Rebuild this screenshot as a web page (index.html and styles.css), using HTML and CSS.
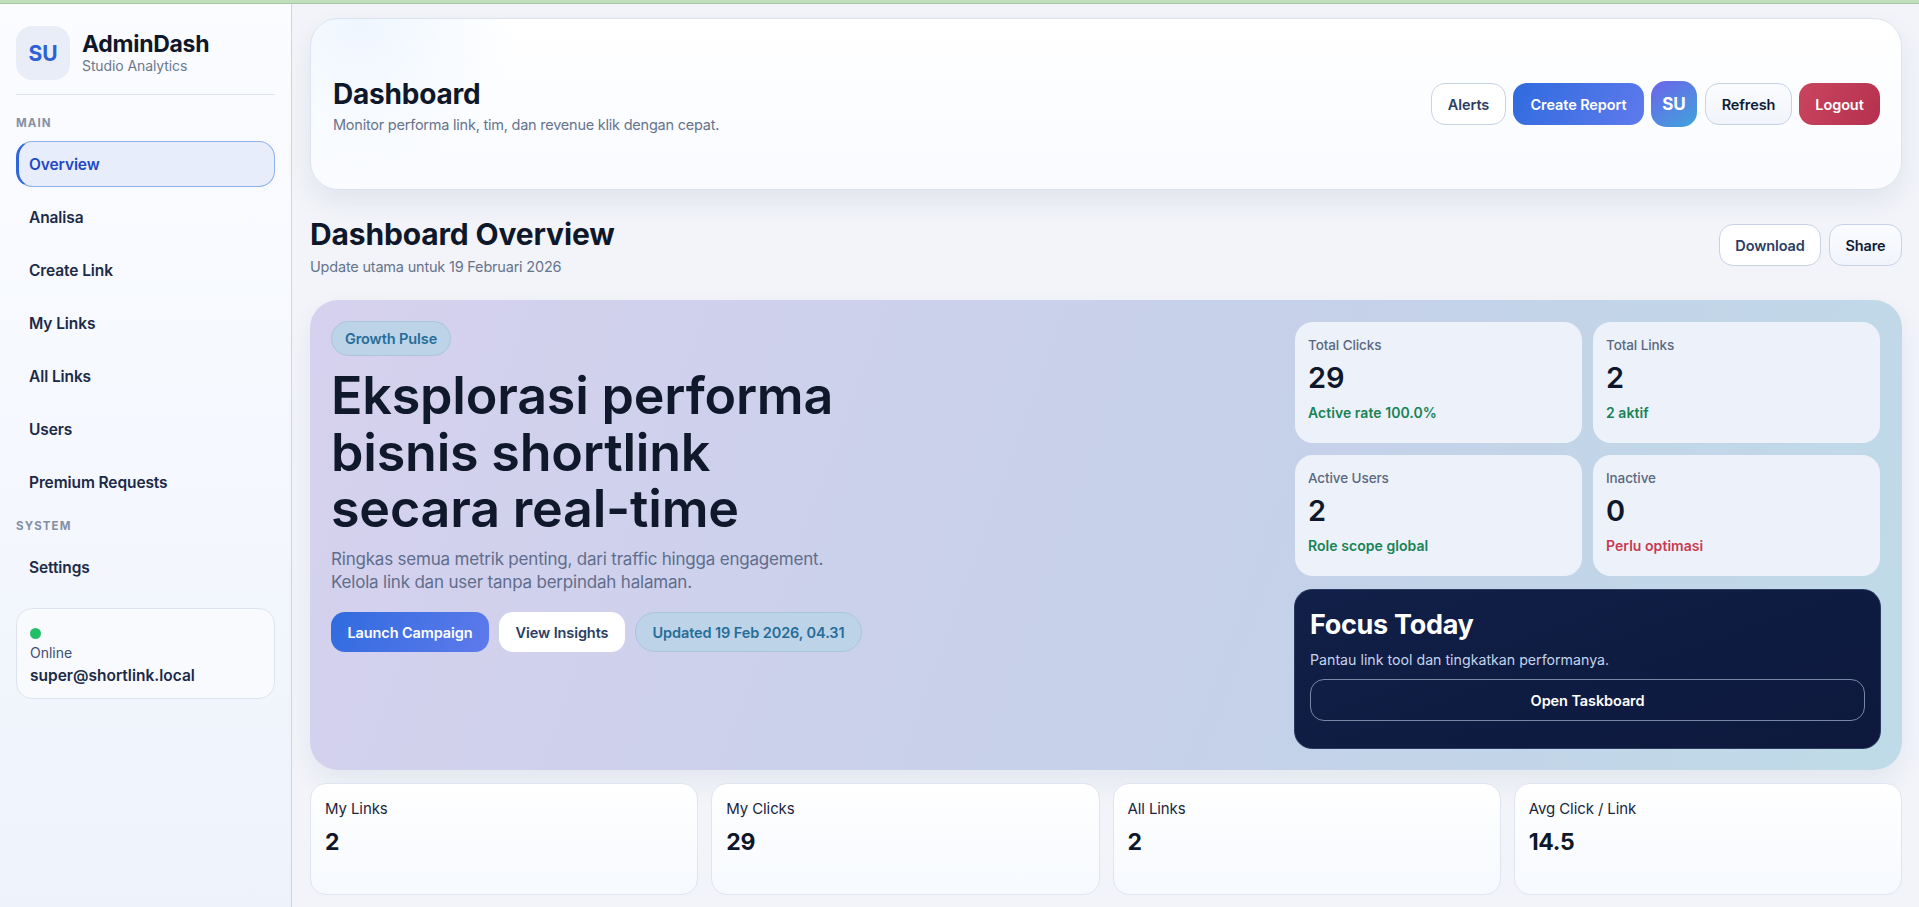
FILE: index.html
```html
<!DOCTYPE html>
<html lang="id">
<head>
  <meta charset="UTF-8" />
  <title>AdminDash</title>
  <link rel="stylesheet" href="styles.css">
</head>
<body>
  <div class="load-strip"></div>
  <div class="shell">
    <aside class="sidebar">
      <div class="brand">
        <div class="brand-logo">SU</div>
        <div class="brand-text">
          <div class="brand-name">AdminDash</div>
          <div class="brand-sub">Studio Analytics</div>
        </div>
      </div>

      <div class="nav-label nav-label-main">MAIN</div>
      <nav class="nav">
        <a class="nav-item active">Overview</a>
        <a class="nav-item">Analisa</a>
        <a class="nav-item">Create Link</a>
        <a class="nav-item">My Links</a>
        <a class="nav-item">All Links</a>
        <a class="nav-item">Users</a>
        <a class="nav-item">Premium Requests</a>
      </nav>
      <div class="nav-label nav-label-system">SYSTEM</div>
      <nav class="nav nav-system">
        <a class="nav-item">Settings</a>
      </nav>

      <div class="status-card">
        <span class="status-dot"></span>
        <div class="status-text">Online</div>
        <div class="status-mail">super@shortlink.local</div>
      </div>
    </aside>

    <main class="main">
      <header class="topbar">
        <div class="topbar-head">
          <h1 class="topbar-title">Dashboard</h1>
          <p class="topbar-sub">Monitor performa link, tim, dan revenue klik dengan cepat.</p>
        </div>
        <div class="topbar-actions">
          <button class="btn btn-white btn-alerts">Alerts</button>
          <button class="btn btn-primary btn-report">Create Report</button>
          <div class="avatar">SU</div>
          <button class="btn btn-soft btn-refresh">Refresh</button>
          <button class="btn btn-danger btn-logout">Logout</button>
        </div>
      </header>

      <section class="page-head">
        <div>
          <h2 class="page-title">Dashboard Overview</h2>
          <p class="page-sub">Update utama untuk 19 Februari 2026</p>
        </div>
        <div class="page-actions">
          <button class="btn btn-white btn-download">Download</button>
          <button class="btn btn-soft btn-share">Share</button>
        </div>
      </section>

      <section class="hero">
        <div class="hero-left">
          <span class="pill pill-growth">Growth Pulse</span>
          <h3 class="hero-title">Eksplorasi performa bisnis shortlink secara real-time</h3>
          <p class="hero-text">Ringkas semua metrik penting, dari traffic hingga engagement. Kelola link dan user tanpa berpindah halaman.</p>
          <div class="hero-actions">
            <button class="btn btn-primary btn-launch">Launch Campaign</button>
            <button class="btn btn-plain">View Insights</button>
            <span class="pill pill-updated">Updated 19 Feb 2026, 04.31</span>
          </div>
        </div>

        <div class="hero-right">
          <div class="mini-grid">
            <div class="mini-card">
              <div class="mini-label">Total Clicks</div>
              <div class="mini-value">29</div>
              <div class="mini-meta good">Active rate 100.0%</div>
            </div>
            <div class="mini-card">
              <div class="mini-label">Total Links</div>
              <div class="mini-value">2</div>
              <div class="mini-meta good">2 aktif</div>
            </div>
            <div class="mini-card">
              <div class="mini-label">Active Users</div>
              <div class="mini-value">2</div>
              <div class="mini-meta good">Role scope global</div>
            </div>
            <div class="mini-card">
              <div class="mini-label">Inactive</div>
              <div class="mini-value">0</div>
              <div class="mini-meta bad">Perlu optimasi</div>
            </div>
          </div>
          <div class="focus">
            <div class="focus-title">Focus Today</div>
            <p class="focus-text">Pantau link tool dan tingkatkan performanya.</p>
            <button class="focus-btn">Open Taskboard</button>
          </div>
        </div>
      </section>

      <section class="stats">
        <div class="stat"><div class="stat-label">My Links</div><div class="stat-value">2</div></div>
        <div class="stat"><div class="stat-label">My Clicks</div><div class="stat-value">29</div></div>
        <div class="stat"><div class="stat-label">All Links</div><div class="stat-value">2</div></div>
        <div class="stat"><div class="stat-label">Avg Click / Link</div><div class="stat-value">14.5</div></div>
      </section>
    </main>
  </div>
</body>
</html>
```

FILE: styles.css
```css
* {
  box-sizing: border-box;
}

html, body {
  height: 100%;
}

body {
  margin: 0;
  display: flex;
  flex-direction: column;
  overflow: hidden;
  font-family: Inter, "Noto Sans", sans-serif;
  color: #0f172a;
  background: #f2f4f9;
}

h1, h2, h3, p {
  margin: 0;
}

.load-strip {
  height: 4px;
  background: #c2dfbd;
  border-bottom: 1px solid #a9c9a6;
}

.shell {
  flex: 1;
  display: flex;
  min-height: 0;
}

/* sidebar */
.sidebar {
  width: 292px;
  flex-shrink: 0;
  padding: 22px 16px 0;
  border-right: 1px solid #cdd6e8;
  background: linear-gradient(180deg, #fbfcff 0%, #f5f8fe 50%, #eef2fb 100%);
}

.brand {
  display: flex;
  align-items: center;
  gap: 12px;
  padding-bottom: 14px;
  border-bottom: 1px solid #dde4f0;
}

.brand-logo {
  width: 54px;
  height: 54px;
  border-radius: 16px;
  background: #e9edf7;
  color: #2f5fd6;
  font-size: 21px;
  font-weight: 700;
  display: flex;
  align-items: center;
  justify-content: center;
}

.brand-text {
  padding-bottom: 2px;
}

.brand-name {
  font-size: 23px;
  line-height: 26px;
  font-weight: 700;
  letter-spacing: -0.3px;
  color: #0f172a;
}

.brand-sub {
  font-size: 14px;
  line-height: 17px;
  letter-spacing: -0.1px;
  color: #6b7890;
}

.nav-label {
  font-size: 11.5px;
  line-height: 14px;
  font-weight: 700;
  letter-spacing: 1.1px;
  color: #8390a6;
}

.nav-label-main {
  margin-top: 21px;
  margin-bottom: 11px;
}

.nav-label-system {
  margin-top: 14px;
}

.nav {
  display: flex;
  flex-direction: column;
  gap: 7px;
}

.nav-system {
  margin-top: 11px;
}

.nav-item {
  height: 46px;
  display: flex;
  align-items: center;
  padding-left: 12px;
  border: 1px solid transparent;
  border-radius: 16px;
  font-size: 15.5px;
  font-weight: 600;
  letter-spacing: -0.1px;
  color: #1c2a48;
}

.nav-item.active {
  background: #e7edfb;
  border-color: #8fb0ef;
  border-left: 3px solid #2f66dc;
  padding-left: 10px;
  color: #2348c4;
}

.status-card {
  margin-top: 18px;
  height: 91px;
  padding: 19px 13px 0;
  border: 1px solid #dde4f0;
  border-radius: 16px;
  background: #f8fafe;
}

.status-dot {
  display: block;
  width: 11px;
  height: 11px;
  border-radius: 50%;
  background: #22c066;
}

.status-text {
  margin-top: 5px;
  font-size: 14px;
  line-height: 18px;
  color: #3d4f72;
}

.status-mail {
  margin-top: 4px;
  font-size: 15.5px;
  line-height: 20px;
  font-weight: 600;
  color: #1c2a48;
}

/* main */
.main {
  flex: 1;
  min-width: 0;
  padding: 14px 17px 0 18px;
}

.topbar {
  height: 172px;
  display: flex;
  align-items: center;
  justify-content: space-between;
  padding: 0 21px 0 22px;
  border: 1px solid #dbe3f1;
  border-radius: 28px;
  background: radial-gradient(circle at 3% 0%, #eff6ff 0%, rgba(255, 255, 255, 0) 10%), linear-gradient(180deg, #ffffff 0%, #f9fbff 100%);
  box-shadow: 0 12px 28px rgba(30, 50, 100, 0.08);
}

.topbar-head {
  padding-top: 3px;
}

.topbar-title {
  font-size: 28px;
  line-height: 34px;
  font-weight: 700;
  letter-spacing: -0.2px;
}

.topbar-sub {
  margin-top: 4px;
  font-size: 14.5px;
  line-height: 20px;
  letter-spacing: -0.23px;
  color: #66748c;
}

.topbar-actions {
  display: flex;
  align-items: center;
  gap: 7px;
}

.btn {
  height: 42px;
  padding: 0;
  border: 1px solid #c6d2e6;
  border-radius: 14px;
  font-family: inherit;
  font-size: 14.5px;
  font-weight: 600;
  letter-spacing: -0.1px;
  white-space: nowrap;
}

.btn-white {
  background: #fff;
  color: #2b3d63;
}

.btn-soft {
  background: linear-gradient(180deg, #fbfcff, #f1f4fb);
  color: #0f1c38;
}

.btn-primary {
  border: none;
  background: linear-gradient(120deg, #2f6bde, #5f7aec);
  color: #fff;
}

.btn-danger {
  border: none;
  background: linear-gradient(120deg, #c9455f, #b5304e);
  color: #fff;
}

.btn-alerts {
  width: 75px;
}

.btn-report {
  width: 131px;
}

.btn-refresh {
  width: 87px;
}

.btn-logout {
  width: 81px;
}

.avatar {
  width: 46px;
  height: 46px;
  margin-right: 1px;
  border-radius: 15px;
  background: linear-gradient(145deg, #6d63ea, #3fa4dc);
  color: #fff;
  font-size: 17px;
  font-weight: 700;
  display: flex;
  align-items: center;
  justify-content: center;
}

.page-head {
  margin-top: 24px;
  height: 86px;
  display: flex;
  align-items: flex-start;
  justify-content: space-between;
}

.page-title {
  font-size: 30px;
  line-height: 40px;
  font-weight: 700;
  letter-spacing: -0.15px;
  color: #0f172a;
}

.page-sub {
  margin-top: 3px;
  font-size: 14.5px;
  line-height: 20px;
  letter-spacing: -0.2px;
  color: #66748c;
}

.page-actions {
  display: flex;
  gap: 8px;
  padding-top: 10px;
}

.btn-download {
  width: 102px;
}

.btn-share {
  width: 73px;
}

/* hero */
.hero {
  height: 470px;
  display: flex;
  justify-content: space-between;
  padding: 21px;
  border-radius: 28px;
  background: linear-gradient(110deg, #d6d1ee 0%, #c5d1e9 60%, #bfdbe8 100%);
  box-shadow: 0 12px 28px rgba(30, 50, 100, 0.07);
}

.hero-left {
  width: 560px;
}

.pill {
  display: inline-flex;
  align-items: center;
  border: 1px solid #a9c5de;
  border-radius: 999px;
  background: #bdd3e8;
  color: #256d98;
  font-size: 14.5px;
  font-weight: 600;
  letter-spacing: -0.1px;
}

.pill-growth {
  height: 35px;
  padding: 0 13px;
}

.hero-title {
  margin-top: 12px;
  width: 525px;
  font-size: 52px;
  line-height: 56.7px;
  font-weight: 600;
  letter-spacing: -0.2px;
  color: #10182b;
}

.hero-text {
  margin-top: 10px;
  width: 500px;
  font-size: 17px;
  line-height: 23px;
  letter-spacing: -0.2px;
  color: #5f6e8c;
}

.hero-actions {
  display: flex;
  align-items: center;
  gap: 10px;
  margin-top: 18px;
}

.btn-launch {
  width: 158px;
  height: 40px;
}

.btn-plain {
  width: 126px;
  height: 40px;
  border: none;
  background: #fff;
  color: #2b3d63;
}

.pill-updated {
  width: 227px;
  height: 40px;
  justify-content: center;
}

.hero-right {
  width: 587px;
  padding-top: 1px;
  display: flex;
  flex-direction: column;
  gap: 13px;
}

.mini-grid {
  display: grid;
  grid-template-columns: 1fr 1fr;
  gap: 12px 11px;
  margin: 0 1px;
}

.mini-card {
  height: 121px;
  padding: 13px 13px 0;
  border-radius: 18px;
  background: #edf2fa;
}

.mini-label {
  font-size: 13.5px;
  line-height: 20px;
  font-weight: 500;
  letter-spacing: -0.1px;
  color: #5a6880;
}

.mini-value {
  margin-top: 5px;
  font-size: 29px;
  line-height: 36px;
  font-weight: 600;
  color: #0f172a;
}

.mini-meta {
  margin-top: 7px;
  font-size: 14px;
  line-height: 20px;
  font-weight: 600;
  letter-spacing: 0.05px;
}

.good {
  color: #188356;
}

.bad {
  color: #c83a50;
}

.focus {
  height: 161px;
  padding: 17px 15px 0;
  border: 1px solid #2a3a60;
  border-radius: 18px;
  background: linear-gradient(160deg, #112048, #0d183c);
  color: #fff;
}

.focus-title {
  font-size: 27px;
  line-height: 36px;
  font-weight: 700;
  letter-spacing: -0.3px;
}

.focus-text {
  margin-top: 7px;
  font-size: 14.2px;
  line-height: 20px;
  letter-spacing: 0;
  color: #c4d3ec;
}

.focus-btn {
  width: 100%;
  height: 42px;
  margin-top: 9px;
  border: 1px solid #7787a6;
  border-radius: 14px;
  background: transparent;
  color: #fff;
  font-family: inherit;
  font-size: 14.5px;
  font-weight: 600;
  letter-spacing: -0.1px;
}

/* bottom stats */
.stats {
  margin-top: 13px;
  display: grid;
  grid-template-columns: repeat(4, 1fr);
  gap: 13px;
}

.stat {
  height: 112px;
  padding: 15px 14px 0;
  border: 1px solid #dfe5f1;
  border-radius: 16px;
  background: linear-gradient(180deg, #ffffff, #f6f9fe);
}

.stat-label {
  font-size: 15px;
  line-height: 20px;
  letter-spacing: -0.1px;
  color: #1a2640;
}

.stat-value {
  margin-top: 8px;
  font-size: 23px;
  line-height: 30px;
  font-weight: 700;
  letter-spacing: -0.3px;
  color: #0f172a;
}
```
